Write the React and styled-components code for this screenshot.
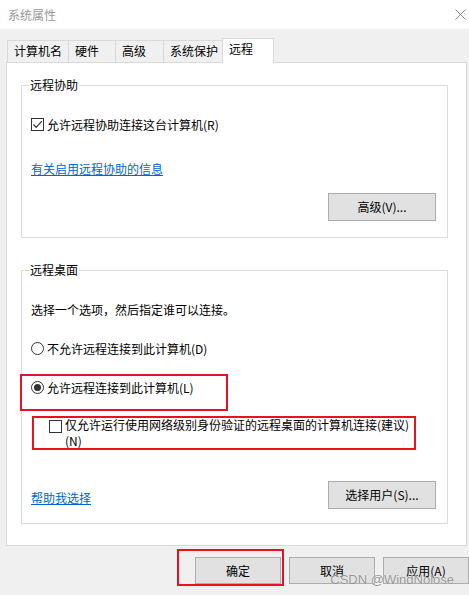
import React from "react";
import styled, { createGlobalStyle } from "styled-components";

const GlobalStyle = createGlobalStyle`
  html, body {
    margin: 0;
    padding: 0;
    background: #f0f0f0;
  }
  body {
    font-family: "Noto Sans CJK SC", "Liberation Sans", sans-serif;
    font-size: 12px;
    color: #000;
  }
`;

const Window = styled.div`
  position: relative;
  width: 469px;
  height: 595px;
  overflow: hidden;
  background: #f0f0f0;
`;

const TitleBar = styled.div`
  display: flex;
  align-items: center;
  justify-content: space-between;
  height: 29px;
  padding: 0 3px 0 8px;
  background: #fff;
`;

const Title = styled.span`
  color: #9a9a9a;
  line-height: 16px;
`;

const Body = styled.div`
  padding: 0 2px 0 6px;
`;

const TabStrip = styled.div`
  display: flex;
  align-items: flex-end;
  margin-top: 9px;
  margin-bottom: -1px;
  padding-left: 1px;
`;

const Tab = styled.div`
  position: relative;
  z-index: ${(p) => (p.$active ? 1 : "auto")};
  box-sizing: border-box;
  width: ${(p) => p.$width}px;
  height: ${(p) => (p.$active ? 25 : 23)}px;
  margin-left: -1px;
  padding: 2px 0 0 6px;
  border: 1px solid #d9d9d9;
  border-bottom: none;
  background: ${(p) => (p.$active ? "#fff" : "#f0f0f0")};
  line-height: 16px;
  white-space: nowrap;

  &:first-child {
    margin-left: 0;
  }
`;

const Panel = styled.div`
  position: relative;
  padding: 14px 18px 21px 14px;
  border: 1px solid #d9d9d9;
  background: #fff;
`;

const Group = styled.fieldset`
  margin: ${(p) => p.$top || 0}px 0 0 0;
  padding: 23px 11px ${(p) => p.$bottom}px 9px;
  border: 1px solid #dcdcdc;
  min-inline-size: 0;
`;

const Legend = styled.legend`
  margin-left: -2px;
  padding: 0 1px;
  line-height: 16px;
`;

const Option = styled.div`
  display: flex;
  align-items: center;
  height: 17px;
  line-height: 17px;
  margin-top: ${(p) => p.$top || 0}px;
  white-space: nowrap;
`;

const Text = styled.div`
  line-height: 17px;
  margin-top: ${(p) => p.$top || 0}px;
`;

const Box = styled.span`
  display: flex;
  align-items: center;
  justify-content: center;
  box-sizing: border-box;
  flex-shrink: 0;
  width: 13px;
  height: 13px;
  margin-right: 3px;
  margin-top: ${(p) => p.$top || 0}px;
  border: 1px solid #333;
  background: #fff;
`;

const Radio = styled.span`
  display: flex;
  align-items: center;
  justify-content: center;
  box-sizing: border-box;
  flex-shrink: 0;
  width: 13px;
  height: 13px;
  margin-right: 3px;
  border: 1px solid #333;
  border-radius: 50%;
  background: #fff;
`;

const Dot = styled.span`
  width: 7px;
  height: 7px;
  border-radius: 50%;
  background: #333;
`;

const Link = styled.a`
  display: block;
  width: fit-content;
  margin-top: ${(p) => p.$top || 0}px;
  margin-bottom: ${(p) => p.$bottom || 0}px;
  color: #0066cc;
  line-height: 17px;
  text-decoration: underline;
  cursor: pointer;
`;

const Button = styled.button`
  display: block;
  box-sizing: border-box;
  width: ${(p) => p.$width}px;
  height: ${(p) => p.$height || 28}px;
  margin-top: ${(p) => p.$top || 0}px;
  margin-left: ${(p) => (p.$right ? "auto" : 0)};
  padding: 0;
  border: 1px solid #adadad;
  background: #e1e1e1;
  color: #000;
  font-family: inherit;
  font-size: 12px;
  line-height: 16px;
`;

const Marked = styled.div`
  position: relative;
  margin-top: ${(p) => p.$top || 0}px;
`;

const Mark = styled.div`
  position: absolute;
  left: ${(p) => p.$x}px;
  top: ${(p) => p.$y}px;
  width: ${(p) => p.$w}px;
  height: ${(p) => p.$h}px;
  box-sizing: border-box;
  border: 2px solid #e81123;
  pointer-events: none;
`;

const NoteOption = styled.div`
  display: flex;
  align-items: flex-start;
  padding-left: 18px;
  line-height: 16px;
  white-space: nowrap;
`;

const ActionRow = styled.div`
  display: flex;
  align-items: flex-end;
  justify-content: space-between;
  margin-top: 32px;
`;

const Footer = styled.div`
  display: flex;
  justify-content: flex-end;
  gap: 8px;
  margin-top: 11px;
`;

const Watermark = styled.div`
  position: absolute;
  right: 15px;
  bottom: 7px;
  font-family: "Liberation Sans", sans-serif;
  font-size: 13px;
  line-height: 16px;
  color: rgba(130, 130, 130, 0.85);
  text-shadow: 0 0 1px #fff;
  pointer-events: none;
`;

const CloseIcon = () => (
  <svg width="11" height="11" viewBox="0 0 11 11">
    <path d="M0.5 0.5 L10.5 10.5 M10.5 0.5 L0.5 10.5" stroke="#8a8a8a" strokeWidth="1" fill="none" />
  </svg>
);

const Check = () => (
  <svg width="11" height="11" viewBox="0 0 11 11">
    <path d="M1.5 5.5 L4.2 8.3 L9.8 2.2" stroke="#333" strokeWidth="1.2" fill="none" />
  </svg>
);

const tabs = [
  { label: "计算机名", width: 62 },
  { label: "硬件", width: 48 },
  { label: "高级", width: 49 },
  { label: "系统保护", width: 60 },
  { label: "远程", width: 52, active: true },
];

export default function App() {
  return (
    <Window>
      <GlobalStyle />
      <TitleBar>
        <Title>系统属性</Title>
        <CloseIcon />
      </TitleBar>

      <Body>
        <TabStrip>
          {tabs.map((t) => (
            <Tab key={t.label} $width={t.width} $active={t.active}>
              {t.label}
            </Tab>
          ))}
        </TabStrip>

        <Panel>
          <Group $bottom={16}>
            <Legend>远程协助</Legend>
            <Option>
              <Box>
                <Check />
              </Box>
              允许远程协助连接这台计算机(R)
            </Option>
            <Link $top={27}>有关启用远程协助的信息</Link>
            <Button $width={108} $top={16} $right>
              高级(V)...
            </Button>
          </Group>

          <Group $top={24} $bottom={14}>
            <Legend>远程桌面</Legend>
            <Text>选择一个选项，然后指定谁可以连接。</Text>
            <Option $top={22}>
              <Radio />
              不允许远程连接到此计算机(D)
            </Option>
            <Marked $top={22}>
              <Option>
                <Radio>
                  <Dot />
                </Radio>
                允许远程连接到此计算机(L)
              </Option>
              <Mark $x={-11} $y={-5} $w={208} $h={37} />
            </Marked>
            <Marked $top={21}>
              <NoteOption>
                <Box $top={3} />
                <span>
                  仅允许运行使用网络级别身份验证的远程桌面的计算机连接(建议)
                  <br />
                  (N)
                </span>
              </NoteOption>
              <Mark $x={1} $y={-1} $w={384} $h={34} />
            </Marked>
            <ActionRow>
              <Link $bottom={3}>帮助我选择</Link>
              <Button $width={108}>选择用户(S)...</Button>
            </ActionRow>
          </Group>
        </Panel>
      </Body>

      <Footer>
        <Marked>
          <Button $width={86} $height={27}>确定</Button>
          <Mark $x={-18} $y={-8} $w={107} $h={37} />
        </Marked>
        <Button $width={86} $height={27}>取消</Button>
        <Button $width={86} $height={27}>应用(A)</Button>
      </Footer>

      <Watermark>CSDN @WindNolose</Watermark>
    </Window>
  );
}
